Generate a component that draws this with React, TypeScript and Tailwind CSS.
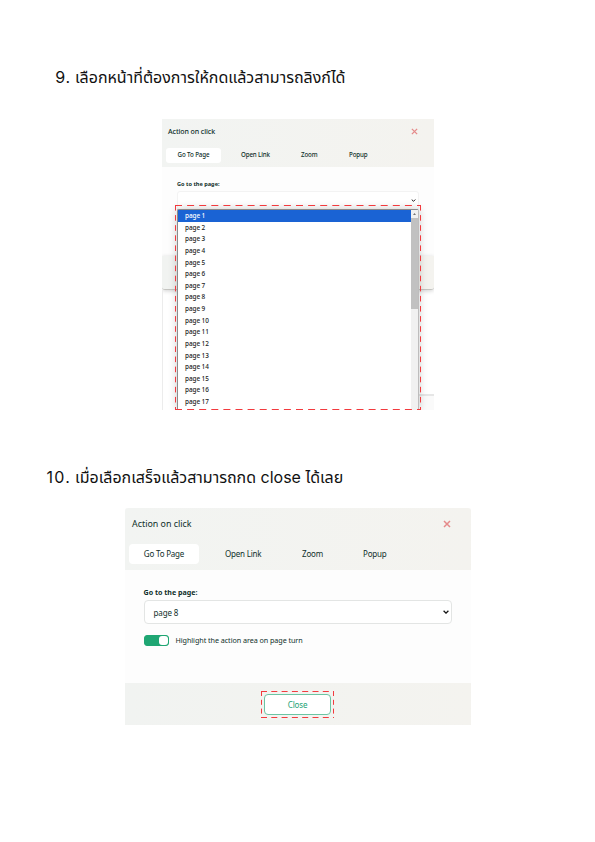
import React from "react";

const ui = "font-['Noto_Sans','Open_Sans',sans-serif] text-[#0f2f2a] whitespace-nowrap";
const heading =
  "flex items-center whitespace-nowrap font-['Inter','Noto_Sans_Thai','Noto_Sans',sans-serif] text-[16px] leading-[24px] text-[#111111]";

function Cross({ className }: { className: string }) {
  return (
    <svg className={className} viewBox="0 0 8 8" fill="none" stroke="#e58a8a" strokeWidth="1.5">
      <path d="M1 1l6 6M7 1L1 7" />
    </svg>
  );
}

function Chevron({ className }: { className: string }) {
  return (
    <svg className={className} viewBox="0 0 6 4" fill="none" stroke="#151515" strokeWidth="1.3">
      <path d="M.6.7L3 3.1 5.4.7" />
    </svg>
  );
}

function DashedFrame({ className, w, h, dash, vdash }: { className: string; w: number; h: number; dash: string; vdash: string }) {
  return (
    <svg className={className} width={w} height={h} fill="none" stroke="#f23a3e" strokeWidth="1">
      <path d={`M0 .5H${w}M0 ${h - 0.5}H${w}`} strokeDasharray={dash} />
      <path d={`M.5 0V${h}M${w - 0.5} 0V${h}`} strokeDasharray={vdash} />
    </svg>
  );
}

function PageListPanel() {
  return (
    <section className="relative ml-[162px] mt-[30px] h-[291px] w-[272px] overflow-hidden bg-white">
      <header className="h-[48px] bg-gradient-to-r from-[#f2f4f2] to-[#f4f3ef]">
        <div className="flex h-[24px] items-center justify-between pl-[6px] pr-[16px]">
          <h2 className={`${ui} pt-[1px] text-[7px] font-medium leading-[10px] tracking-[-0.01em]`}>Action on click</h2>
          <Cross className="size-[7px]" />
        </div>
        <nav className={`${ui} flex h-[24px] items-center pl-[4px] text-[6.2px] font-medium tracking-[-0.02em]`}>
          <span className="flex h-[15px] w-[55px] items-center justify-center rounded-[3px] bg-white">Go To Page</span>
          <span className="ml-[20px] w-[60px]">Open Link</span>
          <span className="w-[48px]">Zoom</span>
          <span>Popup</span>
        </nav>
      </header>
      <div className="h-[89px] bg-[#fdfdfd] pl-[15px] pt-[12px]">
        <div className={`${ui} text-[5.6px] font-bold leading-[10px]`}>Go to the page:</div>
        <div className="mt-[2px] flex h-[19px] w-[242px] items-center justify-end rounded-[3px] border border-[#f3f3f3] bg-white pr-[2px]">
          <Chevron className="h-[3px] w-[5px]" />
        </div>
      </div>
      <footer className="h-[34px] rounded-b-[3px] border-b border-[#c4c4c0] bg-gradient-to-r from-[#f1f3f1] to-[#f4f3ef] shadow-[0_1px_4px_rgba(0,0,0,0.18)]" />
      <div className="flex h-[120px] items-end border-l border-[#ececec]">
        <div className="ml-auto h-[16px] w-[15px] border-t-2 border-[#e6e6e6] bg-[#fafafa]" />
      </div>
      <div className="absolute left-[15px] top-[90px] flex h-[201px] w-[242px] rounded-t-[2px] border-l border-r border-t border-[#8b8b8b] border-r-[#bdbdbd] bg-white shadow-[0_0_8px_rgba(0,0,0,0.22)]">
        <ul className="flex-1">
          {Array.from({ length: 17 }, (_, i) => (
            <li
              key={i}
              className={
                i === 0
                  ? "flex h-[11.64px] items-center whitespace-nowrap bg-[#1a63d4] pl-[7px] font-['Noto_Sans',sans-serif] text-[6.4px] font-medium tracking-[-0.01em] text-white"
                  : "flex h-[11.64px] items-center whitespace-nowrap pl-[7px] font-['Noto_Sans',sans-serif] text-[6.4px] font-medium tracking-[-0.01em] text-[#1a1a1a]"
              }
            >
              page {i + 1}
            </li>
          ))}
        </ul>
        <div className="flex w-[7px] flex-col bg-[#f1f1f1]">
          <svg className="h-[8px] w-[7px]" viewBox="0 0 7 8">
            <path d="M2 5l1.5-2L5 5z" fill="#777" />
          </svg>
          <div className="h-[91px] bg-[#c1c1c1]" />
        </div>
      </div>
      <DashedFrame className="absolute left-[13px] top-[86px]" w={246} h={205} dash="7 5.1" vdash="5.6 4.5" />
    </section>
  );
}

function SelectedPagePanel() {
  return (
    <section className="ml-[125px] mt-[19px] h-[217px] w-[346px] bg-[#fdfdfd]">
      <header className="h-[62px] rounded-t-[3px] bg-gradient-to-r from-[#f2f4f2] to-[#f4f3ef]">
        <div className="flex h-[32px] items-center justify-between pl-[7px] pr-[20px]">
          <h2 className={`${ui} text-[8.9px] leading-[12px]`}>Action on click</h2>
          <Cross className="size-[8px]" />
        </div>
        <nav className={`${ui} flex h-[28px] items-center pl-[4px] text-[8px] tracking-[-0.025em]`}>
          <span className="flex h-[20px] w-[70px] items-center justify-center rounded-[4px] bg-white">Go To Page</span>
          <span className="ml-[26px] w-[77px]">Open Link</span>
          <span className="w-[61px]">Zoom</span>
          <span>Popup</span>
        </nav>
      </header>
      <div className="h-[113px] pl-[18.5px] pt-[16px]">
        <div className={`${ui} text-[7.1px] font-bold leading-[12px]`}>Go to the page:</div>
        <div className="mt-[2px] flex h-[24px] w-[308px] items-center justify-between rounded-[4px] border border-[#e3e5e4] bg-white pl-[9px] pr-[2px]">
          <span className={`${ui} pt-[1px] text-[8px] tracking-[-0.015em]`}>page 8</span>
          <Chevron className="h-[4px] w-[6px]" />
        </div>
        <div className="mt-[10px] flex h-[12px] items-center gap-[7px]">
          <span className="flex h-[11px] w-[25px] justify-end rounded-[3px] border border-[#1fa673] bg-[#1fa673]">
            <span className="w-[9px] rounded-[3px] bg-white" />
          </span>
          <span className={`${ui} text-[7.2px] tracking-[-0.008em]`}>Highlight the action area on page turn</span>
        </div>
      </div>
      <footer className="flex h-[42px] items-center bg-gradient-to-r from-[#f1f3f1] to-[#f4f3ef] pl-[136px]">
        <div className="relative flex h-[27px] w-[73px] items-center justify-center">
          <button className="h-[21px] w-[67px] rounded-[4px] border border-[#6cc5a3] bg-white font-['Noto_Sans',sans-serif] text-[8px] leading-[19px] tracking-[-0.02em] text-[#22a274]">
            Close
          </button>
          <DashedFrame className="absolute inset-0" w={73} h={27} dash="6 4.3" vdash="5 3.8" />
        </div>
      </footer>
    </section>
  );
}

export default function App() {
  return (
    <main className="flex h-[842px] w-[595px] flex-col overflow-hidden bg-white">
      <div className={`${heading} mt-[65px]`}>
        <span className="w-[71px] text-right tracking-[0.8px]">9.</span>
        <span className="ml-[4px]">เลือกหน้าที่ต้องการให้กดแล้วสามารถลิงก์ได้</span>
      </div>
      <PageListPanel />
      <div className={`${heading} mt-[55px]`}>
        <span className="w-[71px] text-right tracking-[1.2px]">10.</span>
        <span className="ml-[4px]">เมื่อเลือกเสร็จแล้วสามารถกด close ได้เลย</span>
      </div>
      <SelectedPagePanel />
    </main>
  );
}
